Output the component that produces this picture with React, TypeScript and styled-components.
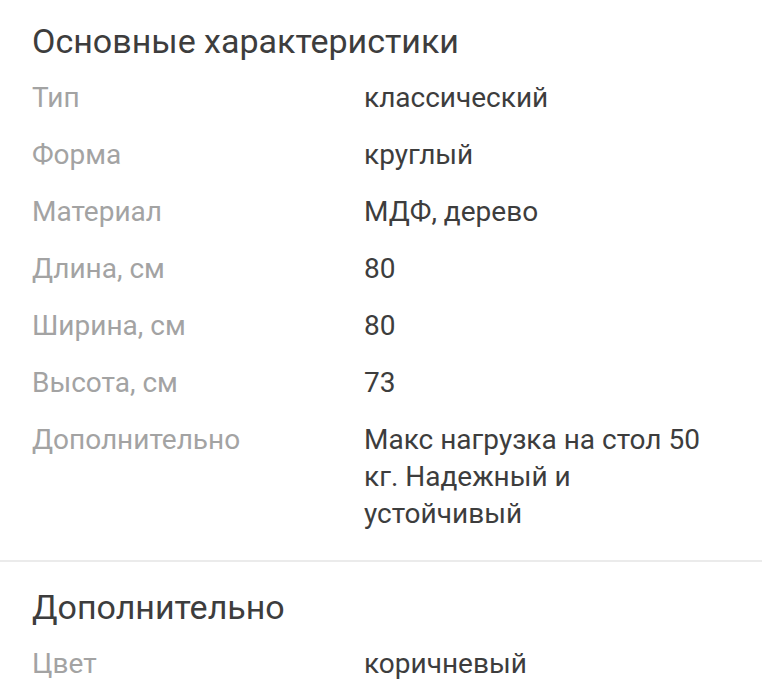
import React from 'react';
import styled, { createGlobalStyle } from 'styled-components';

const GlobalStyle = createGlobalStyle`
  body {
    margin: 0;
    background: #ffffff;
    font-family: Roboto, "Noto Sans", sans-serif;
  }
`;

const Section = styled.section<{ divided?: boolean }>`
  padding: 21px 32px 28px;
  border-bottom: ${props => props.divided ? '2px solid #ebebeb' : 'none'};

  & + & {
    padding-top: 25px;
  }
`;

const Title = styled.h2`
  margin: 0 0 18px;
  font-size: 34px;
  font-weight: 400;
  line-height: 40px;
  color: #3d3d3d;
`;

const Specs = styled.dl`
  display: grid;
  grid-template-columns: 332px 1fr;
  row-gap: 20px;
  margin: 0;
`;

const Label = styled.dt`
  font-size: 28px;
  line-height: 37px;
  color: #a3a3a3;
`;

const Value = styled.dd`
  margin: 0;
  font-size: 28px;
  line-height: 37px;
  color: #3d3d3d;
`;

type Spec = [string, string];

const main: Spec[] = [
  ['Тип', 'классический'],
  ['Форма', 'круглый'],
  ['Материал', 'МДФ, дерево'],
  ['Длина, см', '80'],
  ['Ширина, см', '80'],
  ['Высота, см', '73'],
  ['Дополнительно', 'Макс нагрузка на стол 50 кг. Надежный и устойчивый'],
];

const extra: Spec[] = [['Цвет', 'коричневый']];

function SpecList({ items }: { items: Spec[] }) {
  return (
    <Specs>
      {items.map(([label, value]) => (
        <React.Fragment key={label}>
          <Label>{label}</Label>
          <Value>{value}</Value>
        </React.Fragment>
      ))}
    </Specs>
  );
}

function App() {
  return (
    <>
      <GlobalStyle />
      <Section divided>
        <Title>Основные характеристики</Title>
        <SpecList items={main} />
      </Section>
      <Section>
        <Title>Дополнительно</Title>
        <SpecList items={extra} />
      </Section>
    </>
  );
}

export default App;
